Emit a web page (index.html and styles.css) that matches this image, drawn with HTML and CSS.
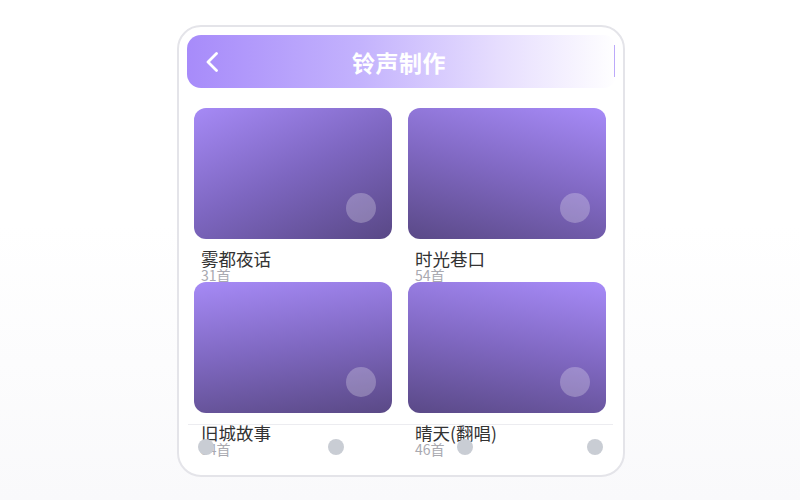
FILE: index.html
```html
<!DOCTYPE html>
<html lang="zh-CN">
<head>
	<meta charset="UTF-8">
	<title>铃声制作</title>
	<link rel="stylesheet" href="styles.css">
</head>
<body>
	<div class="phone">
		<div class="top_bar">
			<span class="back">
				<svg width="14" height="20" viewBox="0 0 14 20"><path d="M11.5 1.5 L3 10 L11.5 18.5" fill="none" stroke="#fff" stroke-width="2.8" stroke-linecap="round" stroke-linejoin="round"/></svg>
			</span>
			<div class="title">铃声制作</div>
			<span></span>
		</div>
		<div class="ring_list">
			<div class="ring_item">
				<div class="cover cover_a"><i class="dot"></i></div>
				<div class="name">雾都夜话</div>
				<div class="count">31首</div>
			</div>
			<div class="ring_item">
				<div class="cover cover_b"><i class="dot"></i></div>
				<div class="name">时光巷口</div>
				<div class="count">54首</div>
			</div>
			<div class="ring_item">
				<div class="cover cover_c"><i class="dot"></i></div>
				<div class="name">旧城故事</div>
				<div class="count">34首</div>
			</div>
			<div class="ring_item">
				<div class="cover cover_d"><i class="dot"></i></div>
				<div class="name">晴天(翻唱)</div>
				<div class="count">46首</div>
			</div>
		</div>
		<div class="tab_bar">
			<i></i><i></i><i></i><i></i>
		</div>
	</div>
</body>
</html>
```

FILE: styles.css
```css
body{
	margin:0;
	height:500px;
	background:linear-gradient(180deg,#fff 0%,#fff 45%,#f9f9fb 100%);
	font-family:"Noto Sans CJK SC","Noto Sans",sans-serif;
}
.phone{
	position:relative;
	box-sizing:border-box;
	width:448px;
	height:452px;
	margin:25px 0 0 177px;
	padding:8px 6px 0 8px;
	background:#fff;
	border:2px solid #e4e4e9;
	border-radius:24px;
	overflow:hidden;
}
.top_bar{
	position:relative;
	display:grid;
	grid-template-columns:30px 1fr 36px;
	align-items:center;
	height:53px;
	padding:0 18px;
	border-radius:14px;
	background:linear-gradient(90deg,#a78bfa 0%,#c3b2fd 40%,#e6ddfe 72%,#fff 100%);
}
.top_bar:after{
	content:"";
	position:absolute;
	right:2px;
	top:10px;
	bottom:11px;
	width:1.5px;
	background:#bca9fa;
}
.back{
	display:flex;
	align-items:center;
}
.title{
	text-align:center;
	color:#fff;
	font-size:23px;
	font-weight:bold;
	letter-spacing:0.5px;
}
.ring_list{
	display:grid;
	grid-template-columns:198px 198px;
	grid-auto-rows:174px;
	column-gap:16px;
	margin:20px 0 0 7px;
}
.ring_item{
	min-width:0;
}
.cover{
	position:relative;
	height:131px;
	border-radius:12px;
}
.cover_a{ background:linear-gradient(155deg,#a68af6 0%,#7d66c0 50%,#594886 100%); }
.cover_b{ background:linear-gradient(195deg,#a78bf8 0%,#8068c2 50%,#5a4987 100%); }
.cover_c{ background:linear-gradient(172deg,#a68af6 0%,#7f68c1 50%,#5a4986 100%); }
.cover_d{ background:linear-gradient(190deg,#a78bf8 0%,#8068c2 50%,#5a4987 100%); }
.dot{
	position:absolute;
	right:16px;
	bottom:16px;
	width:30px;
	height:30px;
	border-radius:50%;
	background:rgba(255,255,255,0.25);
}
.name{
	margin:10px 0 0 7px;
	font-size:17.5px;
	line-height:19px;
	color:#333;
	white-space:nowrap;
}
.count{
	margin-left:7px;
	font-size:14px;
	line-height:15px;
	color:#a9a9b0;
}
.tab_bar{
	position:absolute;
	left:9px;
	right:10px;
	bottom:0;
	height:51px;
	box-sizing:border-box;
	padding:14px 10px 0;
	border-top:1px solid #ececf0;
	display:flex;
	justify-content:space-between;
	align-items:flex-start;
}
.tab_bar i{
	width:16px;
	height:16px;
	border-radius:50%;
	background:#c9cdd4;
}
```
